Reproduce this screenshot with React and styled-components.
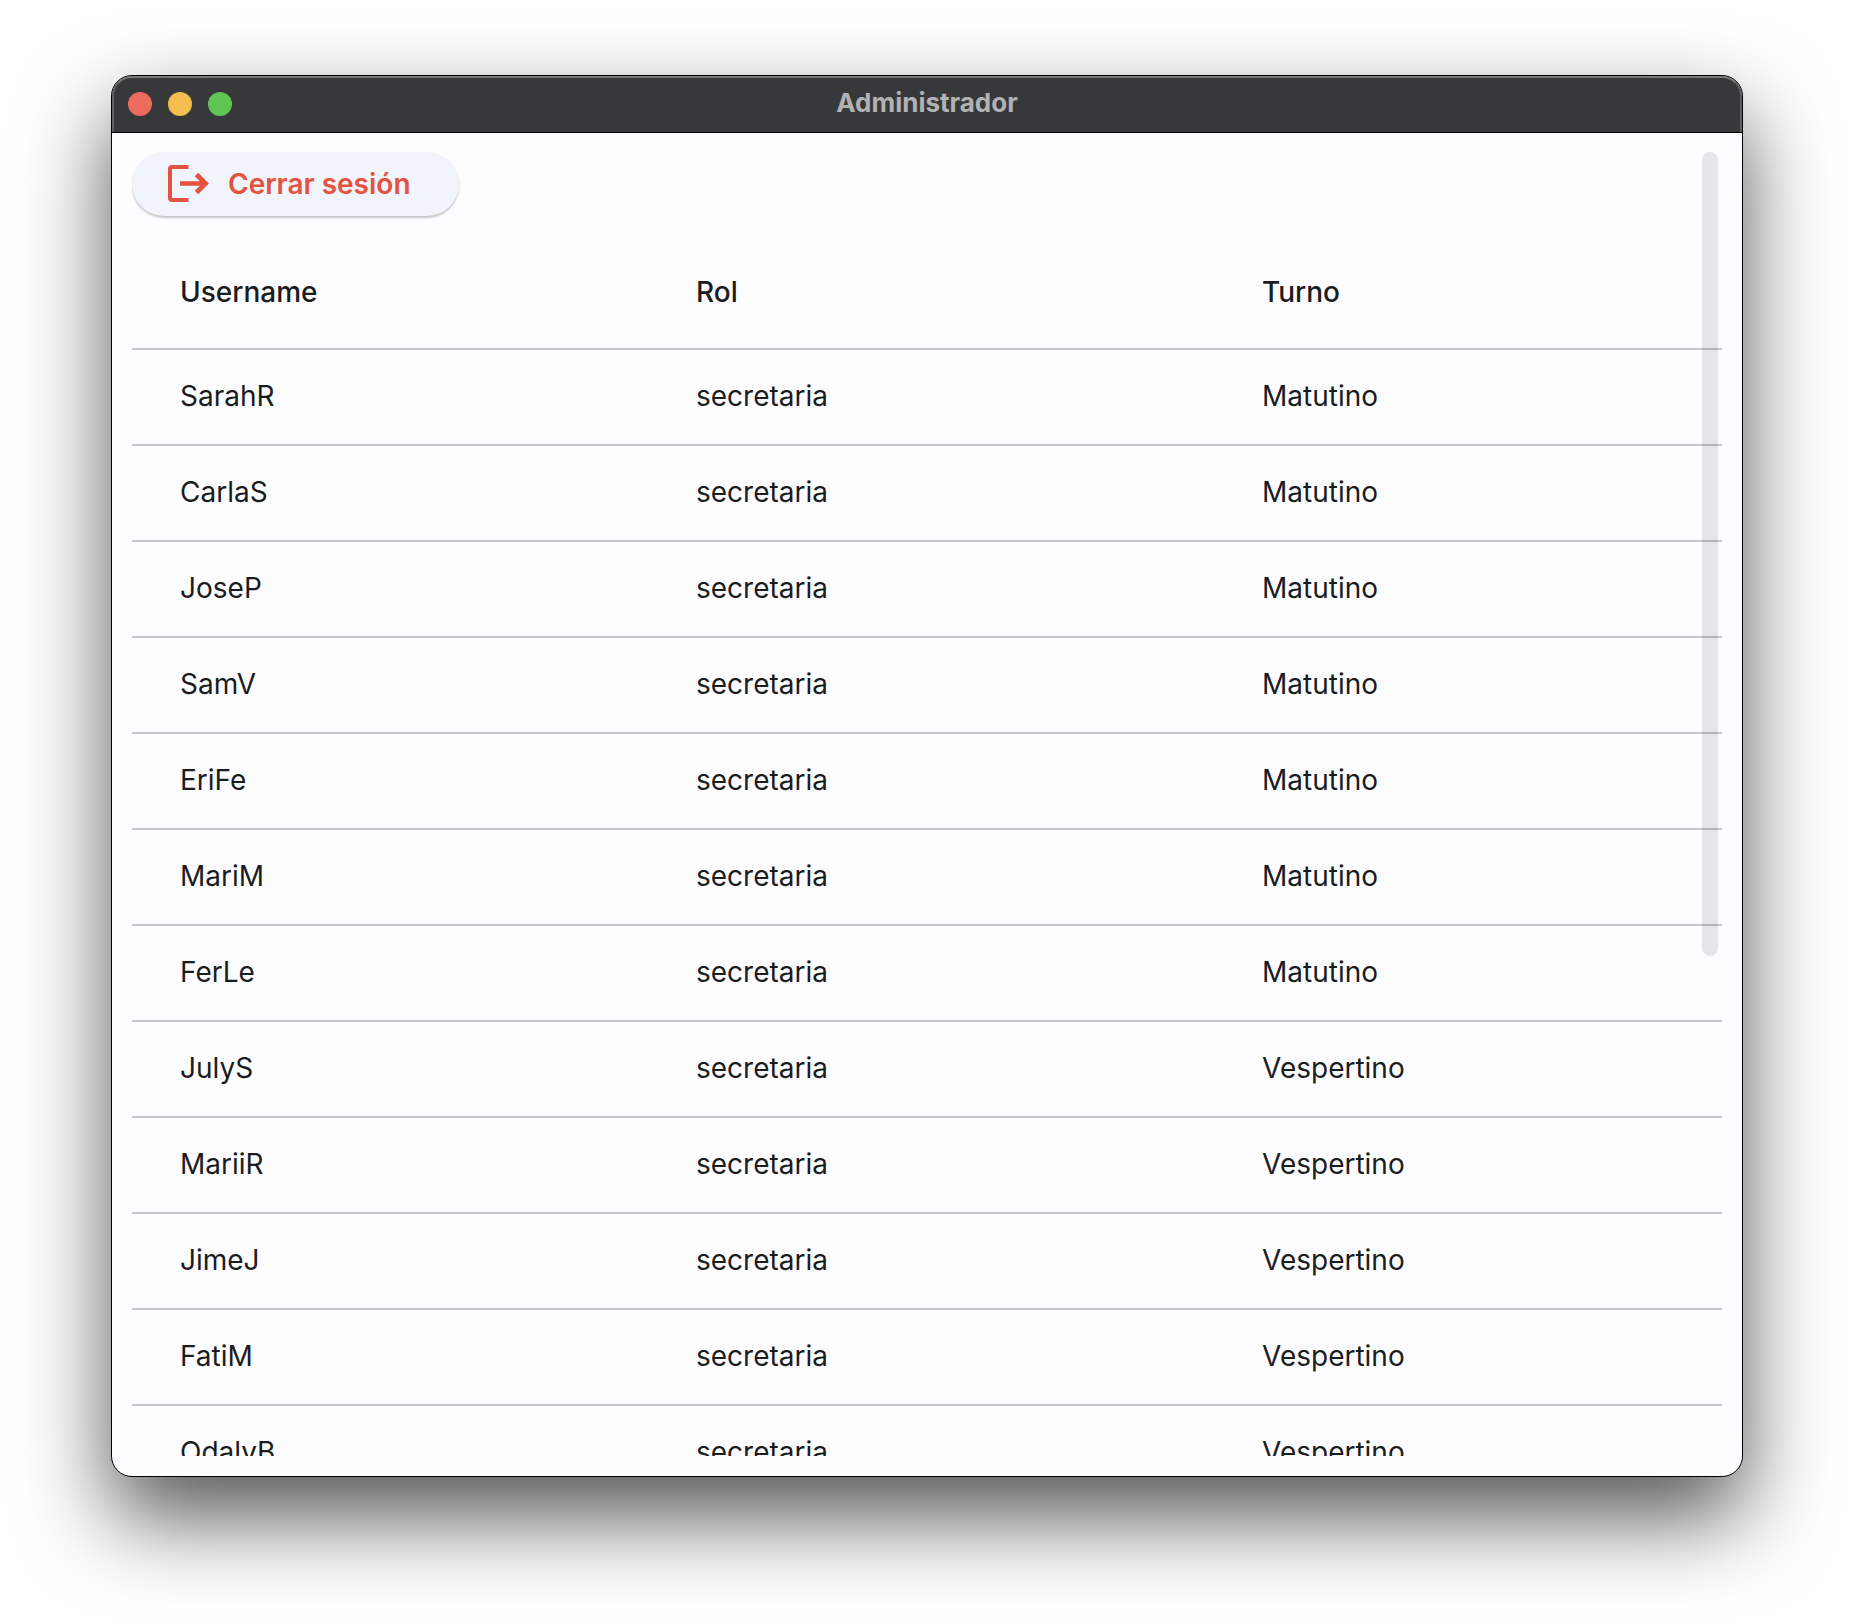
import React from "react";
import styled, { createGlobalStyle } from "styled-components";

const GlobalStyle = createGlobalStyle`
  *, *::before, *::after { box-sizing: border-box; }
  body {
    margin: 0;
    background: #ffffff;
    font-family: Inter, "Liberation Sans", sans-serif;
    color: #1a1c1e;
  }
`;

const Desktop = styled.div`
  display: flex;
  height: 100vh;
  padding: 75px 111px 147px;
  overflow: hidden;
`;

const Window = styled.main`
  display: flex;
  flex-direction: column;
  flex: 1;
  min-width: 0;
  overflow: hidden;
  background: #fdfdff;
  border: 1px solid #000000;
  border-radius: 21px;
  box-shadow: 0 40px 88px rgba(0, 0, 0, 0.67);
`;

const TitleBar = styled.header`
  position: relative;
  display: grid;
  grid-template-columns: 1fr auto 1fr;
  align-items: center;
  flex: none;
  height: 57px;
  padding: 0 16px;
  background: #373839;
  border-bottom: 1px solid #000000;

  &::after {
    content: "";
    position: absolute;
    inset: 0;
    border: 2px solid #5f6060;
    border-top-color: #767876;
    border-bottom: 0;
    border-radius: 20px 20px 0 0;
    pointer-events: none;
  }
`;

const WindowControls = styled.div`
  display: flex;
  gap: 16px;
`;

const ControlDot = styled.button`
  width: 24px;
  height: 24px;
  padding: 0;
  border: 0;
  border-radius: 50%;
  background: ${({ $color }) => $color};
`;

const Title = styled.h1`
  margin: 0;
  padding-bottom: 2px;
  font-size: 26px;
  line-height: 32px;
  font-weight: 700;
  color: #b2b2b4;
`;

const Content = styled.section`
  display: flex;
  flex: 1;
  min-height: 0;
  padding: 19px 20px 20px;
`;

const ScrollArea = styled.div`
  position: relative;
  display: flex;
  flex-direction: column;
  align-items: flex-start;
  gap: 20px;
  flex: 1;
  min-width: 0;
  overflow: hidden;
`;

const ScrollThumb = styled.div`
  position: absolute;
  top: 0;
  right: 4px;
  width: 16px;
  border-radius: 8px;
  background: rgba(26, 28, 30, 0.1);
`;

const LogoutButton = styled.button`
  display: flex;
  align-items: center;
  gap: 16px;
  flex: none;
  height: 64px;
  padding: 0 48px 0 32px;
  border: 0;
  border-radius: 32px;
  background: #f1f4fb;
  box-shadow: 0 2px 2px rgba(0, 0, 0, 0.22);
  color: #e4533f;
  font: inherit;
  font-size: 28px;
  line-height: 40px;
  font-weight: 600;
`;

const Table = styled.table`
  flex: none;
  width: 100%;
  table-layout: fixed;
  border-collapse: separate;
  border-spacing: 0;
  font-size: 28px;
  line-height: 40px;
  text-align: left;
`;

const Column = styled.col`
  width: ${({ $width }) => $width};
`;

const HeaderCell = styled.th`
  height: 112px;
  padding: 0 0 0 48px;
  font-weight: 500;
`;

const Cell = styled.td`
  height: 96px;
  padding: 0 0 2px 48px;
  border-top: 2px solid #c3c7cf;
`;

const users = [
  ["SarahR", "secretaria", "Matutino"],
  ["CarlaS", "secretaria", "Matutino"],
  ["JoseP", "secretaria", "Matutino"],
  ["SamV", "secretaria", "Matutino"],
  ["EriFe", "secretaria", "Matutino"],
  ["MariM", "secretaria", "Matutino"],
  ["FerLe", "secretaria", "Matutino"],
  ["JulyS", "secretaria", "Vespertino"],
  ["MariiR", "secretaria", "Vespertino"],
  ["JimeJ", "secretaria", "Vespertino"],
  ["FatiM", "secretaria", "Vespertino"],
  ["OdalyB", "secretaria", "Vespertino"],
];

const visibleShare = 1304 / 2116;

function LogoutIcon() {
  return (
    <svg width="48" height="48" viewBox="0 0 48 48" fill="none" stroke="currentColor" strokeWidth="4" aria-hidden="true">
      <path d="M24.500 7H8a2 2 0 0 0-2 2v29a2 2 0 0 0 2 2h16.500" />
      <path d="M16 23.500h25" strokeWidth="4.500" />
      <path d="M32.500 14.500l9 9l-9 9" strokeWidth="4.800" />
    </svg>
  );
}

export default function App() {
  return (
    <>
      <GlobalStyle />
      <Desktop>
        <Window>
          <TitleBar>
            <WindowControls>
              <ControlDot type="button" aria-label="Cerrar" $color="#ed6a5e" />
              <ControlDot type="button" aria-label="Minimizar" $color="#f5bf4f" />
              <ControlDot type="button" aria-label="Ampliar" $color="#61c554" />
            </WindowControls>
            <Title>Administrador</Title>
          </TitleBar>
          <Content>
            <ScrollArea>
              <LogoutButton type="button">
                <LogoutIcon />
                Cerrar sesión
              </LogoutButton>
              <Table>
                <colgroup>
                  <Column $width="32.45%" />
                  <Column $width="35.6%" />
                  <Column />
                </colgroup>
                <thead>
                  <tr>
                    <HeaderCell scope="col">Username</HeaderCell>
                    <HeaderCell scope="col">Rol</HeaderCell>
                    <HeaderCell scope="col">Turno</HeaderCell>
                  </tr>
                </thead>
                <tbody>
                  {users.map(([username, rol, turno]) => (
                    <tr key={username}>
                      <Cell>{username}</Cell>
                      <Cell>{rol}</Cell>
                      <Cell>{turno}</Cell>
                    </tr>
                  ))}
                </tbody>
              </Table>
              <ScrollThumb style={{ height: `${visibleShare * 100}%` }} />
            </ScrollArea>
          </Content>
        </Window>
      </Desktop>
    </>
  );
}
